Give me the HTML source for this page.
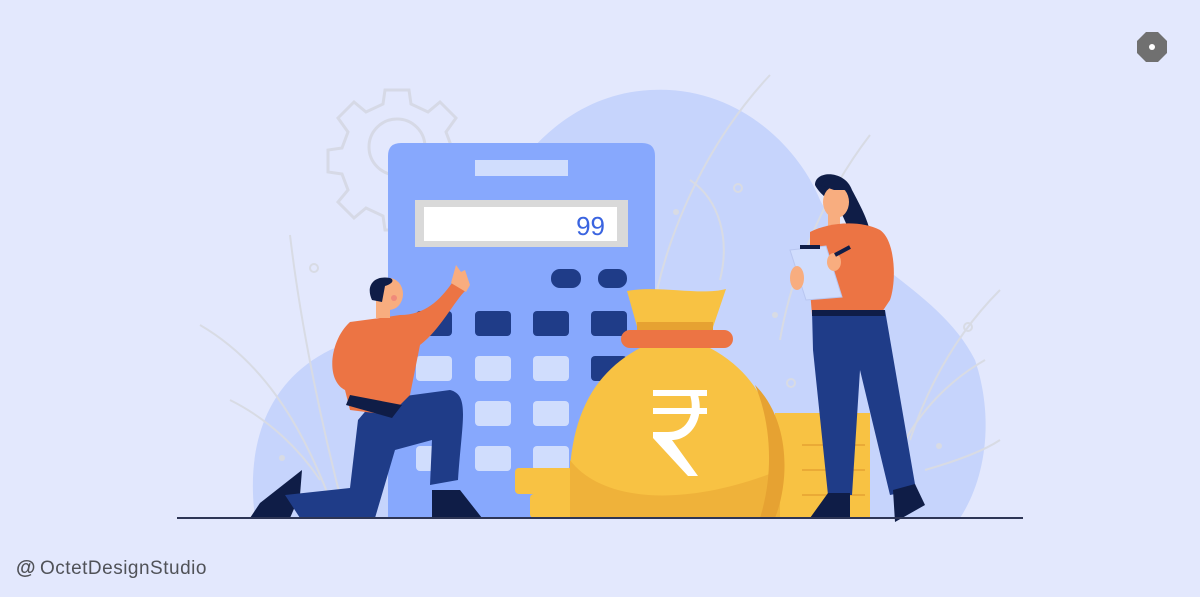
<!DOCTYPE html>
<html><head><meta charset="utf-8"><style>
html,body{margin:0;padding:0;width:1200px;height:597px;overflow:hidden;background:#e3e8fd}
svg{position:absolute;left:0;top:0}
.t{position:absolute;left:16px;top:557px;font-family:"Liberation Sans","DejaVu Sans",sans-serif;font-size:19px;color:#505258;letter-spacing:0.5px}
.t b{font-weight:bold;font-size:20px;margin-right:4px}
</style></head><body>
<svg width="1200" height="597" viewBox="0 0 1200 597">
<path d="M255 518 C245 440 270 380 330 350 C380 330 440 330 470 260 C500 170 560 95 650 90 C740 85 800 150 820 200 C850 260 940 290 975 360 C995 420 985 480 960 518 Z" fill="#c6d4fc"/>
<g fill="none" stroke="#d6d9e6" stroke-width="3">
<circle cx="397" cy="147" r="28"/>
<path d="M385 90 L409 90 L411 104 L428 112 L440 102 L456 118 L446 132 L452 148 L466 150 L466 172 L452 174 L446 190 L456 202 L440 218 L428 208 L411 216 L409 230 L385 230 L383 216 L366 208 L354 218 L338 202 L348 190 L342 174 L328 172 L328 150 L342 148 L348 132 L338 118 L354 102 L366 112 L383 104 Z"/>
</g>
<g fill="none" stroke="#d8dbe4" stroke-width="2">
<path d="M200 325 C260 360 300 420 330 500"/><path d="M290 235 C300 320 320 420 345 515"/><path d="M230 400 C270 420 300 450 320 480"/>
<path d="M770 75 C700 150 660 250 650 330"/><path d="M690 180 C720 200 730 240 720 280"/><path d="M870 135 C820 200 790 280 780 340"/>
<path d="M1000 290 C960 330 930 380 910 440"/><path d="M985 360 C950 380 920 410 900 450"/><path d="M925 470 C960 460 985 450 1000 440"/>
<circle cx="314" cy="268" r="4"/><circle cx="738" cy="188" r="4"/><circle cx="791" cy="383" r="4"/><circle cx="968" cy="327" r="4"/>
</g>
<g fill="#d8dbe4"><circle cx="676" cy="212" r="3"/><circle cx="775" cy="315" r="3"/><circle cx="282" cy="458" r="3"/><circle cx="939" cy="446" r="3"/></g>
<path d="M401 143 L642 143 Q655 143 655 156 L655 518 L388 518 L388 156 Q388 143 401 143Z" fill="#87a8fd"/>
<rect x="475" y="160" width="93" height="16" fill="#d0ddfd"/>
<rect x="415" y="200" width="213" height="47" fill="#d9d9d9"/>
<rect x="424" y="207" width="193" height="34" fill="#fff"/>
<text x="605" y="235" text-anchor="end" font-family="Liberation Sans,sans-serif" font-size="26" fill="#3a64e0">99</text>
<g fill="#1f3c88">
<rect x="551" y="269" width="30" height="19" rx="9"/><rect x="598" y="269" width="29" height="19" rx="9"/>
<rect x="416" y="311" width="36" height="25" rx="4"/><rect x="475" y="311" width="36" height="25" rx="4"/><rect x="533" y="311" width="36" height="25" rx="4"/><rect x="591" y="311" width="36" height="25" rx="4"/>
<rect x="591" y="356" width="36" height="25" rx="4"/>
</g>
<g fill="#d0ddfd">
<rect x="416" y="356" width="36" height="25" rx="4"/><rect x="475" y="356" width="36" height="25" rx="4"/><rect x="533" y="356" width="36" height="25" rx="4"/>
<rect x="416" y="401" width="36" height="25" rx="4"/><rect x="475" y="401" width="36" height="25" rx="4"/><rect x="533" y="401" width="36" height="25" rx="4"/><rect x="591" y="401" width="36" height="25" rx="4"/>
<rect x="416" y="446" width="36" height="25" rx="4"/><rect x="475" y="446" width="36" height="25" rx="4"/><rect x="533" y="446" width="36" height="25" rx="4"/><rect x="591" y="446" width="36" height="25" rx="4"/>
</g>
<rect x="515" y="468" width="60" height="26" rx="4" fill="#f8c243"/>
<rect x="530" y="494" width="45" height="24" rx="4" fill="#f8c243"/>
<rect x="775" y="413" width="95" height="105" fill="#f8c243"/>
<path d="M802 495 L865 495 M802 470 L865 470 M802 445 L865 445" stroke="#e6a232" stroke-width="1.5"/>
<path d="M627 291 C660 285 700 296 726 289 L712 330 L638 330 Z" fill="#f8c243"/>
<rect x="637" y="322" width="76" height="10" fill="#e6a232"/>
<path d="M640 348 C580 380 565 440 570 518 L780 518 C785 440 770 380 710 348 Z" fill="#f8c243"/>
<path d="M570 460 C600 500 680 510 780 470 L780 518 L570 518 Z" fill="#efb23a"/>
<path d="M755 385 C790 420 790 480 775 518 L760 518 C775 470 770 420 755 385Z" fill="#e6a232"/>
<rect x="621" y="330" width="112" height="18" rx="9" fill="#ec7444"/>
<g fill="#fff"><rect x="653" y="390" width="54" height="6"/><rect x="653" y="408" width="54" height="6"/>
<path d="M653 432 L668 432 C690 432 695 410 690 395 L698 395 C705 420 690 440 672 440 L698 476 L688 476 L653 438 Z"/></g>
<g>
<path d="M302 470 L260 503 L250 518 L290 518 L300 495 Z" fill="#0f1d47"/>
<path d="M285 495 L350 488 L358 420 L375 400 L450 390 C470 395 462 420 458 480 L430 485 L432 440 L395 450 L375 518 L300 518 Z" fill="#1f3c88"/>
<path d="M432 490 L460 490 L482 518 L432 518 Z" fill="#0f1d47"/>
<path d="M350 322 C330 340 325 380 345 390 L350 410 L390 415 L410 395 L420 345 C440 330 455 300 466 290 L452 283 C440 300 425 315 400 315 L380 318 Z" fill="#ec7444"/>
<path d="M346 405 L392 418 L402 405 L350 395 Z" fill="#0f1d47"/>
<path d="M451 283 L456 265 L461 272 L465 270 L470 285 L466 292 Z" fill="#f8ad7f"/>
<rect x="376" y="300" width="14" height="18" fill="#f8ad7f"/>
<ellipse cx="389" cy="294" rx="14" ry="16" fill="#f8ad7f"/>
<path d="M372 300 C365 285 375 275 390 278 C395 280 392 284 385 286 L382 302 Z" fill="#0f1d47"/>
<circle cx="394" cy="298" r="3" fill="#f08a7a"/>
</g>
<g>
<path d="M815 185 C815 170 845 170 852 190 C860 205 868 220 870 232 L850 232 L840 210 C830 200 820 195 815 185Z" fill="#0f1d47"/>
<ellipse cx="836" cy="202" rx="13" ry="16" fill="#f8ad7f"/>
<path d="M820 185 C825 176 845 176 850 190 L834 190 Z" fill="#0f1d47"/>
<rect x="828" y="214" width="12" height="14" fill="#f8ad7f"/>
<path d="M810 232 C830 222 860 220 880 230 C895 240 897 280 890 300 L880 315 L812 315 L810 290 Z" fill="#ec7444"/>
<path d="M812 310 L885 310 L916 490 L890 495 L860 370 L852 495 L828 495 L813 350 Z" fill="#1f3c88"/>
<rect x="812" y="310" width="73" height="6" fill="#0f1d47"/>
<path d="M828 493 L850 493 L850 518 L810 518 Z" fill="#0f1d47"/>
<path d="M893 490 L915 484 L925 505 L895 522 Z" fill="#0f1d47"/>
<path d="M790 250 L826 246 L842 297 L806 300 Z" fill="#d0ddfd" stroke="#b8c6f0" stroke-width="1"/>
<rect x="800" y="245" width="20" height="4" fill="#0f1d47"/>
<ellipse cx="797" cy="278" rx="7" ry="12" fill="#f8ad7f"/>
<path d="M845 255 C870 260 880 270 885 290 L870 300 L845 275 Z" fill="#ec7444"/>
<ellipse cx="834" cy="262" rx="7" ry="9" fill="#f8ad7f"/>
<path d="M835 255 L850 247" stroke="#0f1d47" stroke-width="4"/>
</g>
<rect x="177" y="517" width="846" height="2" fill="#2d3555"/>
<polygon points="1146,32 1158,32 1167,41 1167,53 1158,62 1146,62 1137,53 1137,41" fill="#707070"/>
<circle cx="1152" cy="47" r="3" fill="#fff"/>
</svg>
<div class="t"><b>@</b>OctetDesignStudio</div>
</body></html>
